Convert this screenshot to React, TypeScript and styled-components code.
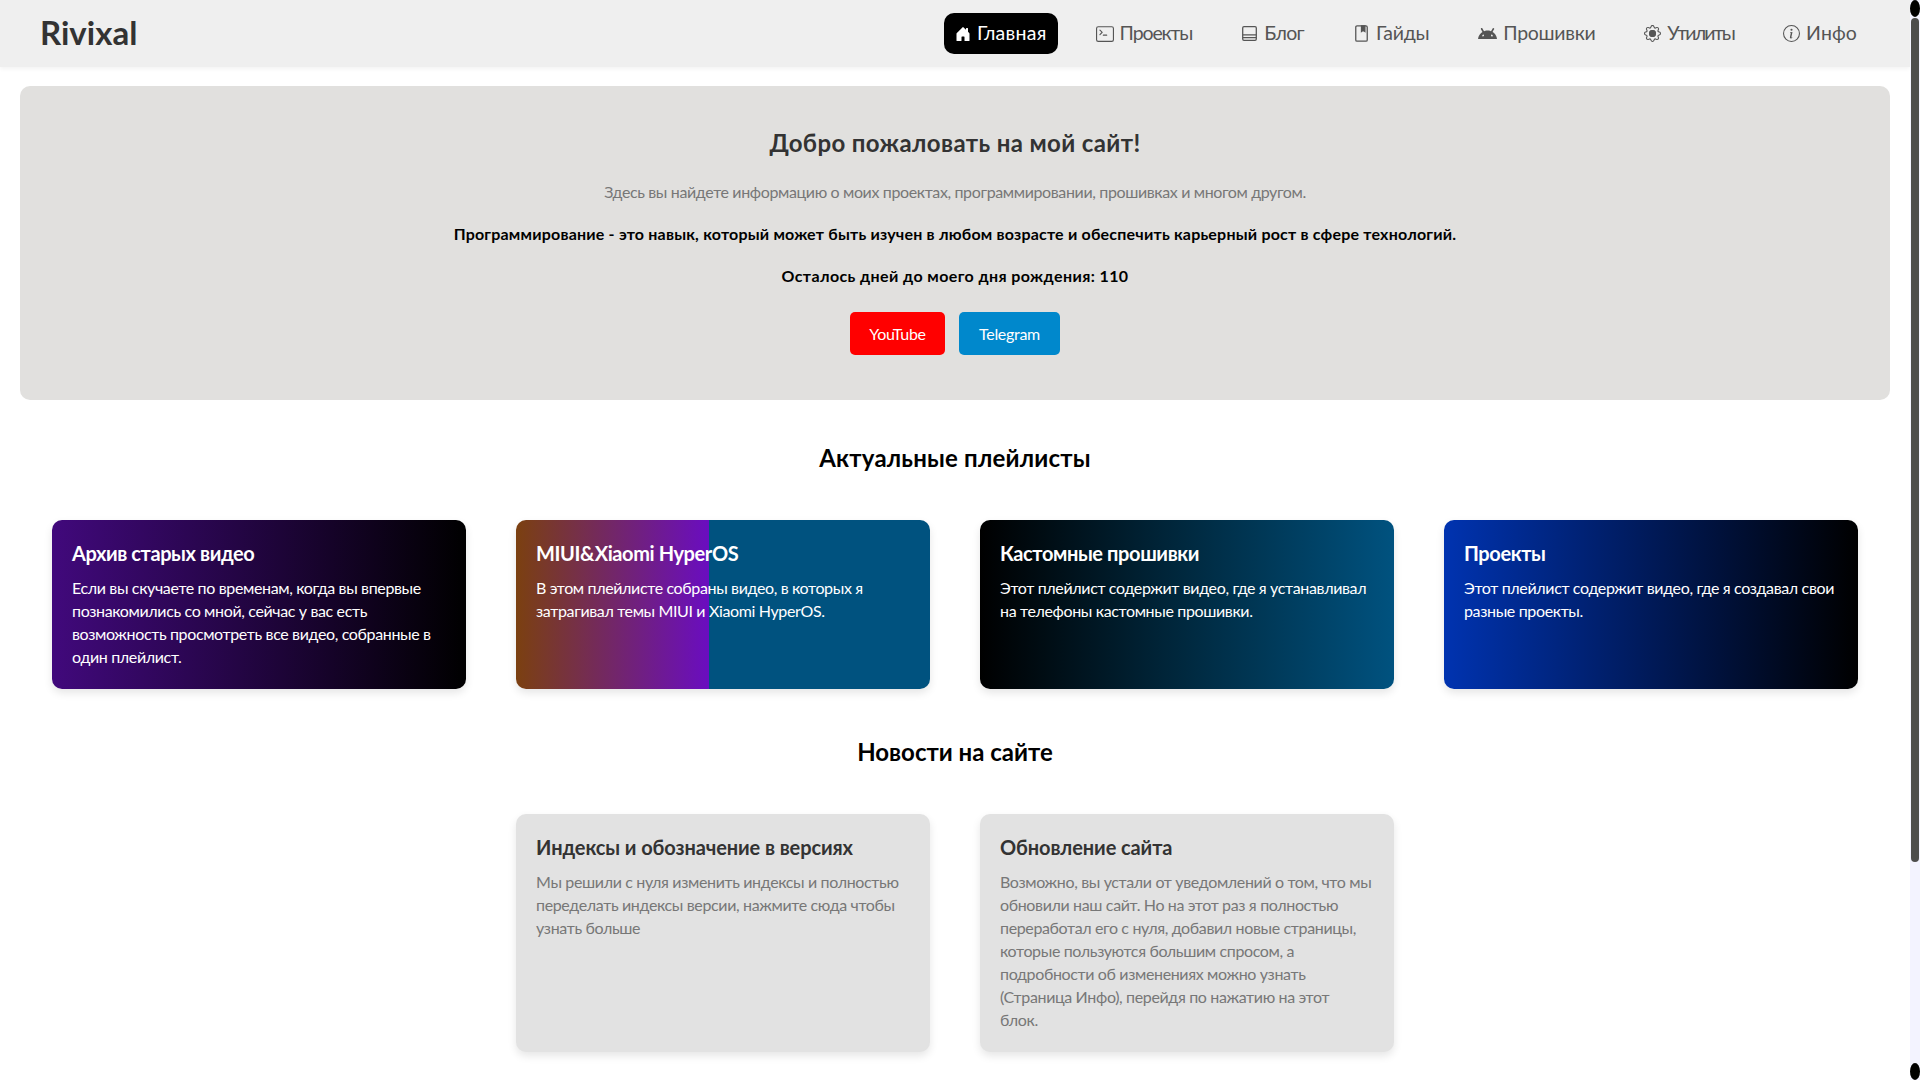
import styled, { createGlobalStyle } from "styled-components";
import { BsGear, BsHouseDoorFill, BsInfoCircle, BsTerminal } from "react-icons/bs";
import { SiAndroid } from "react-icons/si";

const GlobalStyle = createGlobalStyle`
  html {
    scrollbar-width: none;
  }
  body {
    margin: 0;
    background: #fff;
    font-family: "Lato", "Noto Sans", sans-serif;
    color: #333;
  }
`;

const Page = styled.div`
  padding: 0 10px 20px 0;
`;

const Header = styled.header`
  height: 67px;
  padding: 0 42px 0 40px;
  display: flex;
  align-items: center;
  justify-content: space-between;
  background: #efefef;
  box-shadow: 0 2px 4px rgba(0, 0, 0, 0.05);
`;

const Logo = styled.div`
  padding-bottom: 3px;
  font-size: 33px;
  font-weight: 700;
  color: #333;
`;

const Nav = styled.nav`
  display: flex;
  align-items: center;
  gap: 27px;
`;

const NavItem = styled.a<{ $active?: boolean }>`
  height: 41px;
  padding: 0 11px;
  display: flex;
  align-items: center;
  gap: 6px;
  border-radius: 10px;
  color: ${(p) => (p.$active ? "#fff" : "#555")};
  background: ${(p) => (p.$active ? "#000" : "transparent")};
`;

const NavLabel = styled.span<{ $spacing: number }>`
  padding-bottom: 2px;
  font-size: 19.5px;
  letter-spacing: ${(p) => p.$spacing}px;
`;

const GearIcon = styled.span`
  position: relative;
  display: flex;
  &::after {
    content: "";
    position: absolute;
    left: 5px;
    top: 5px;
    width: 7px;
    height: 7px;
    border-radius: 50%;
    background: #555;
  }
`;

const Main = styled.main`
  padding: 19px 20px 0;
`;

const Hero = styled.section`
  height: 314px;
  box-sizing: border-box;
  margin-bottom: 41px;
  padding-top: 40px;
  display: flex;
  flex-direction: column;
  align-items: center;
  background: #e1e0de;
  border-radius: 10px;
`;

const HeroTitle = styled.h1`
  margin: 0 0 20px;
  font-size: 24px;
  line-height: 34px;
  font-weight: 700;
  letter-spacing: 0.38px;
  color: #333;
`;

const HeroText = styled.p<{ $spacing: number; $strong?: boolean }>`
  margin: 0 0 19px;
  font-size: 16px;
  line-height: 23px;
  font-weight: ${(p) => (p.$strong ? 700 : 400)};
  letter-spacing: ${(p) => p.$spacing}px;
  color: ${(p) => (p.$strong ? "#000" : "#777")};
`;

const Buttons = styled.div`
  margin-top: 6px;
  display: flex;
  gap: 14px;
`;

const LinkButton = styled.a<{ $color: string; $width: number }>`
  width: ${(p) => p.$width}px;
  height: 43px;
  display: flex;
  align-items: center;
  justify-content: center;
  border-radius: 5px;
  font-size: 16px;
  letter-spacing: -0.3px;
  color: #fff;
  background: ${(p) => p.$color};
`;

const SectionTitle = styled.h2<{ $spacing?: number }>`
  margin: 0 0 45px;
  text-align: center;
  font-size: 24px;
  line-height: 34px;
  font-weight: 700;
  letter-spacing: ${(p) => p.$spacing ?? 0}px;
  color: #000;
`;

const CardGrid = styled.div<{ $columns: number }>`
  margin-bottom: 46px;
  display: grid;
  grid-template-columns: repeat(${(p) => p.$columns}, 414px);
  justify-content: center;
  gap: 50px;
`;

const Card = styled.article<{ $background: string; $height: number }>`
  height: ${(p) => p.$height}px;
  box-sizing: border-box;
  padding: 19px 20px;
  border-radius: 10px;
  background: ${(p) => p.$background};
  box-shadow: 0 4px 8px rgba(0, 0, 0, 0.1);
`;

const CardTitle = styled.h3<{ $light?: boolean }>`
  margin: 0 0 9px;
  font-size: 20px;
  line-height: 28px;
  font-weight: 700;
  letter-spacing: ${(p) => (p.$light ? "-0.4px" : "-0.1px")};
  color: ${(p) => (p.$light ? "#fff" : "#333")};
`;

const CardText = styled.p<{ $light?: boolean }>`
  margin: 0;
  font-size: 16px;
  line-height: 23px;
  letter-spacing: -0.36px;
  white-space: pre-line;
  color: ${(p) => (p.$light ? "#fff" : "#777")};
`;

const ScrollRail = styled.div`
  position: fixed;
  top: 0;
  right: 0;
  bottom: 0;
  width: 10px;
  display: flex;
  flex-direction: column;
  align-items: center;
  background: #f3f3ff;
`;

const ScrollArrow = styled.div`
  width: 10px;
  height: 17px;
  border-radius: 50%;
  background: #000;
`;

const ScrollThumb = styled.div`
  width: 8px;
  height: 844px;
  margin: 1px 0 auto;
  border-radius: 4px;
  background: #4d4d4d;
`;

// Блог and Гайды have no matching icon in the packages
const BlogIcon = () => (
  <svg width="17" height="17" viewBox="0 0 16 16" fill="none" stroke="currentColor" strokeWidth="1.2">
    <rect x="1.6" y="1.6" width="12.8" height="12.8" rx="1.2" />
    <path d="M1.6 9.2h12.8M1.6 11.8h12.8" />
  </svg>
);

const GuideIcon = () => (
  <svg width="17" height="17" viewBox="0 0 16 16" fill="none" stroke="currentColor" strokeWidth="1.2">
    <rect x="2.6" y="0.8" width="10.8" height="14.4" rx="1.2" />
    <path d="M8 0.8h3.2v5.4L9.6 5 8 6.2z" fill="currentColor" />
  </svg>
);

const navItems = [
  { label: "Главная", icon: <BsHouseDoorFill size={16} />, spacing: 0.25, active: true },
  { label: "Проекты", icon: <BsTerminal size={18} />, spacing: -1.1 },
  { label: "Блог", icon: <BlogIcon />, spacing: -0.7 },
  { label: "Гайды", icon: <GuideIcon />, spacing: -0.25 },
  { label: "Прошивки", icon: <SiAndroid size={19} />, spacing: -0.3 },
  {
    label: "Утилиты",
    icon: (
      <GearIcon>
        <BsGear size={17} />
      </GearIcon>
    ),
    spacing: -1.8,
  },
  { label: "Инфо", icon: <BsInfoCircle size={17} />, spacing: 0.1 },
];

const playlists = [
  {
    title: "Архив старых видео",
    text: "Если вы скучаете по временам, когда вы впервые познакомились со мной, сейчас у вас есть возможность просмотреть все видео, собранные в один плейлист.",
    background: "linear-gradient(90deg, #41097c, #000)",
  },
  {
    title: "MIUI&Xiaomi HyperOS",
    text: "В этом плейлисте собраны видео, в которых я затрагивал темы MIUI и Xiaomi HyperOS.",
    background: "linear-gradient(90deg, #7b4010 0%, #6a0dc0 46.6%, #00527f 46.6%)",
  },
  {
    title: "Кастомные прошивки",
    text: "Этот плейлист содержит видео, где я устанавливал на телефоны кастомные прошивки.",
    background: "linear-gradient(90deg, #000, #00527f)",
  },
  {
    title: "Проекты",
    text: "Этот плейлист содержит видео, где я создавал свои разные проекты.",
    background: "linear-gradient(90deg, #0033b0, #000)",
  },
];

const news = [
  {
    title: "Индексы и обозначение в версиях",
    text: "Мы решили с нуля изменить индексы и полностью переделать индексы версии, нажмите сюда чтобы узнать больше",
  },
  {
    title: "Обновление сайта",
    text: "Возможно, вы устали от уведомлений о том, что мы обновили наш сайт. Но на этот раз я полностью переработал его с нуля, добавил новые страницы, которые пользуются большим спросом, а подробности об изменениях можно узнать (Страница Инфо), перейдя по нажатию на этот\nблок.",
  },
];

const App = () => {
  return (
    <Page>
      <GlobalStyle />
      <Header>
        <Logo>Rivixal</Logo>
        <Nav>
          {navItems.map((item) => (
            <NavItem key={item.label} $active={item.active}>
              {item.icon}
              <NavLabel $spacing={item.spacing}>{item.label}</NavLabel>
            </NavItem>
          ))}
        </Nav>
      </Header>
      <Main>
        <Hero>
          <HeroTitle>Добро пожаловать на мой сайт!</HeroTitle>
          <HeroText $spacing={-0.37}>
            Здесь вы найдете информацию о моих проектах, программировании, прошивках и многом другом.
          </HeroText>
          <HeroText $strong $spacing={0.2}>
            Программирование - это навык, который может быть изучен в любом возрасте и обеспечить карьерный рост в сфере технологий.
          </HeroText>
          <HeroText $strong $spacing={0.4}>
            Осталось дней до моего дня рождения: 110
          </HeroText>
          <Buttons>
            <LinkButton $color="#ff0000" $width={95}>YouTube</LinkButton>
            <LinkButton $color="#0088cc" $width={101}>Telegram</LinkButton>
          </Buttons>
        </Hero>
        <SectionTitle $spacing={0.2}>Актуальные плейлисты</SectionTitle>
        <CardGrid $columns={4}>
          {playlists.map((card) => (
            <Card key={card.title} $background={card.background} $height={169}>
              <CardTitle $light>{card.title}</CardTitle>
              <CardText $light>{card.text}</CardText>
            </Card>
          ))}
        </CardGrid>
        <SectionTitle>Новости на сайте</SectionTitle>
        <CardGrid $columns={2}>
          {news.map((card) => (
            <Card key={card.title} $background="#e2e2e2" $height={238}>
              <CardTitle>{card.title}</CardTitle>
              <CardText>{card.text}</CardText>
            </Card>
          ))}
        </CardGrid>
      </Main>
      <ScrollRail>
        <ScrollArrow />
        <ScrollThumb />
        <ScrollArrow />
      </ScrollRail>
    </Page>
  );
};

export default App;
